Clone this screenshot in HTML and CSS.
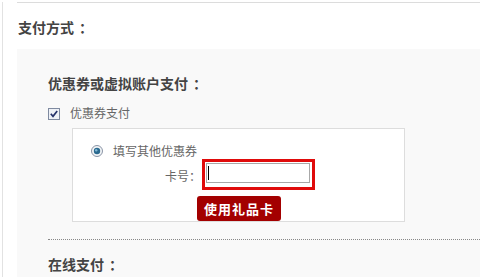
FILE: index.html
```html
<!DOCTYPE html>
<html lang="zh">
<head>
<meta charset="utf-8">
<link rel="stylesheet" href="styles.css">
</head>
<body>
<div class="page">
  <div class="top-rule"></div>
  <h2 class="title">支付方式<span class="colon">：</span></h2>
  <div class="panel">
    <h3 class="sub">优惠券或虚拟账户支付<span class="colon">：</span></h3>
    <label class="check-row">
      <svg class="cb" width="12" height="12" viewBox="0 0 12 12"><rect x="0.5" y="0.5" width="11" height="11" fill="#eef1f7" stroke="#7f8aa0"/><path d="M2.8 5.8 L5 8.3 L9.2 3" fill="none" stroke="#25326a" stroke-width="1.7"/></svg>
      <span>优惠券支付</span>
    </label>
    <div class="inner">
      <div class="radio-row">
        <svg class="rb" width="12" height="12" viewBox="0 0 12 12"><circle cx="6" cy="6" r="5.5" fill="#f2f4f6" stroke="#8a94a6"/><circle cx="6" cy="6" r="3.2" fill="#2b6a8f"/><circle cx="5.2" cy="5.2" r="1.2" fill="#7fb6d4"/></svg>
        <span>填写其他优惠券</span>
      </div>
      <div class="card-row">
        <span class="card-label">卡号<span class="colon small">：</span></span>
        <div class="red-box"><div class="input"><span class="caret"></span></div></div>
      </div>
      <button class="btn">使用礼品卡</button>
    </div>
    <div class="dotted"></div>
    <h3 class="sub online">在线支付<span class="colon">：</span></h3>
  </div>
</div>
</body>
</html>
```
FILE: styles.css
```css
html, body { margin: 0; padding: 0; background: #fff; }
body {
  font-family: "Noto Sans CJK SC", "Noto Sans", sans-serif;
  color: #666;
  font-size: 12px;
  width: 480px;
  height: 277px;
  overflow: hidden;
}
.colon {
  font-family: "Noto Sans CJK TC", "Noto Sans CJK SC", sans-serif;
  margin-left: 5px;
}
.colon.small { margin-left: 0; }
.page {
  margin-left: 2px;
  border-left: 1px solid #e2e2e2;
  padding-left: 14px;
  height: 277px;
  box-sizing: border-box;
}
.top-rule {
  margin-top: 2px;
  border-top: 1px solid #dcdcdc;
}
.title {
  margin: 14px 0 0 1px;
  font-size: 14px;
  line-height: 20px;
  font-weight: bold;
  color: #444;
  height: 32px;
}
.panel {
  background: #f9f9f9;
  padding: 24px 0 0 31px;
  height: 228px;
  box-sizing: border-box;
}
.sub {
  margin: 0;
  font-size: 14px;
  line-height: 20px;
  font-weight: bold;
  color: #444;
}
.check-row {
  display: flex;
  align-items: center;
  margin-top: 10px;
  height: 20px;
  line-height: 20px;
}
.cb { margin-right: 10px; margin-top: 1px; }
.inner {
  margin: 5px 0 0 24px;
  width: 333px;
  background: #fff;
  border: 1px solid #dddddd;
  padding: 14px 0 1px 18px;
  box-sizing: border-box;
  height: 94px;
}
.radio-row {
  display: flex;
  align-items: center;
  height: 16px;
  line-height: 16px;
}
.rb { margin-right: 10px; }
.card-row {
  display: flex;
  align-items: flex-start;
  margin-left: 74px;
}
.card-label {
  padding-top: 9px;
  line-height: 16px;
  white-space: nowrap;
  flex-shrink: 0;
  margin-right: 1px;
}
.red-box {
  border: 3px solid #e00b0b;
  width: 105px;
  height: 23px;
  padding: 1px;
  box-sizing: content-box;
  background: #fff;
  flex-shrink: 0;
}
.input {
  box-sizing: border-box;
  width: 104px;
  height: 20px;
  border: 1px solid #a8a8a8;
  background: #fff;
  display: flex;
  align-items: center;
  padding-left: 1px;
}
.caret {
  width: 1px;
  height: 14px;
  background: #000;
}
.btn {
  display: block;
  margin: 6px 0 0 106px;
  width: 84px;
  height: 25px;
  border: 0;
  border-radius: 3px;
  background: #a30000;
  color: #fff;
  font-family: "Noto Sans CJK SC", sans-serif;
  font-weight: bold;
  font-size: 13px;
  letter-spacing: 1px;
  padding: 0;
  line-height: 25px;
}
.dotted {
  margin-top: 17px;
  border-top: 1px dotted #888;
}
.online { margin-top: 14px; }
```
